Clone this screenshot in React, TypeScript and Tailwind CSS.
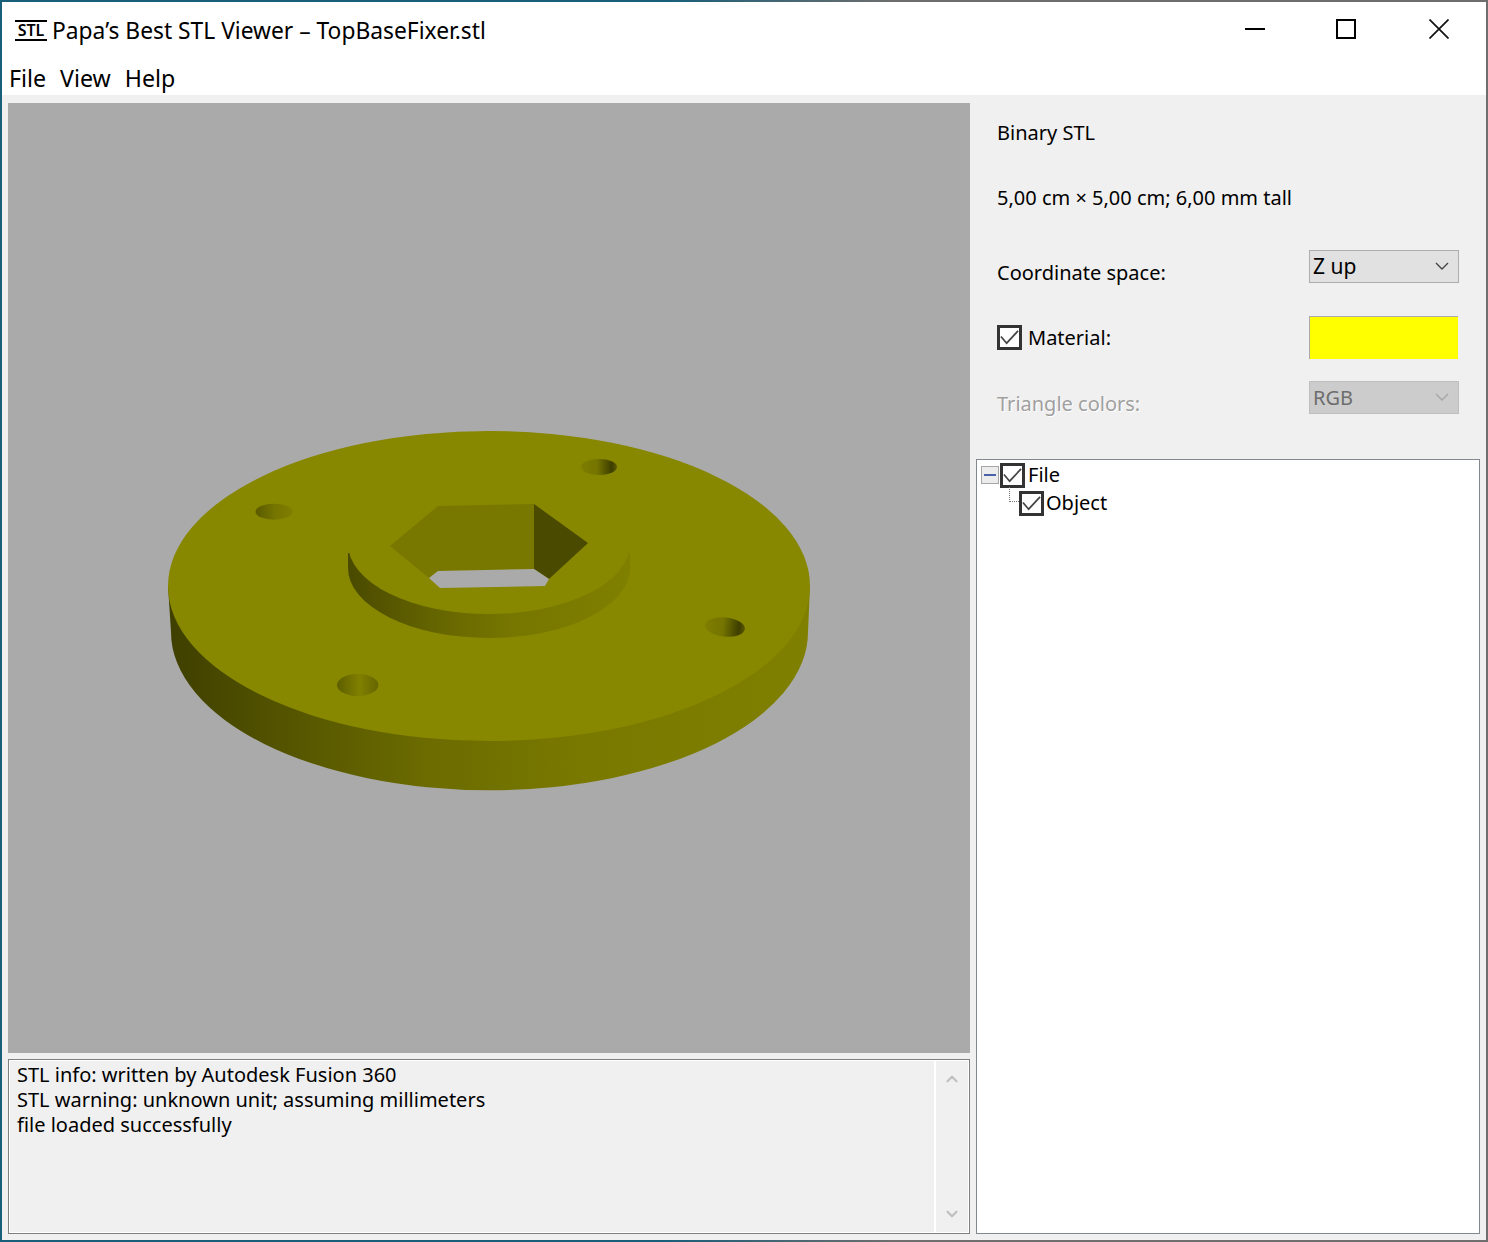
import { ChevronDown, ChevronUp } from "lucide-react";

const Check = () => (
  <span className="flex h-[25px] w-[25px] shrink-0 items-center justify-center border-[3px] border-[#333333] bg-white">
    <svg width="19" height="19" viewBox="0 0 20 20" fill="none" stroke="#444444" strokeWidth="1.8">
      <path d="M1 9l6 7L19 3" />
    </svg>
  </span>
);

const SelectBox = ({ label, disabled }: { label: string; disabled?: boolean }) => (
  <div
    className={
      disabled
        ? "flex h-[33px] w-[150px] items-center justify-between border border-[#bfbfbf] bg-[#cccccc] pl-[3px] pr-[8px] text-[20px] text-[#6d6d6d]"
        : "flex h-[33px] w-[150px] items-center justify-between border border-[#adadad] bg-[#e1e1e1] pb-[1px] pl-[3px] pr-[8px] text-[21px] text-black"
    }
  >
    <span>{label}</span>
    <svg width="16" height="9" viewBox="0 0 16 9" fill="none" stroke={disabled ? "#a6a6a6" : "#444444"} strokeWidth="1.4">
      <path d="M2 1l6 6 6-6" />
    </svg>
  </div>
);

const Part = () => (
  <svg className="block h-full w-full" viewBox="8 103 962 950">
    <defs>
      <linearGradient id="rim" x1="0" x2="1" y1="0" y2="0">
        <stop offset="0" stopColor="#3f3f00" />
        <stop offset="0.2" stopColor="#565600" />
        <stop offset="0.4" stopColor="#6b6b00" />
        <stop offset="0.65" stopColor="#797900" />
        <stop offset="1" stopColor="#7f7f00" />
      </linearGradient>
      <linearGradient id="hub" x1="0" x2="1" y1="0" y2="0">
        <stop offset="0" stopColor="#4a4a00" />
        <stop offset="0.35" stopColor="#686800" />
        <stop offset="0.6" stopColor="#777700" />
        <stop offset="1" stopColor="#7f7f00" />
      </linearGradient>
      <linearGradient id="boreA" x1="0" x2="1" y1="0" y2="0">
        <stop offset="0" stopColor="#5a5a00" />
        <stop offset="0.55" stopColor="#767600" />
        <stop offset="1" stopColor="#7e7e00" />
      </linearGradient>
      <linearGradient id="boreB" x1="0" x2="1" y1="0" y2="0">
        <stop offset="0" stopColor="#7e7e00" />
        <stop offset="0.45" stopColor="#747400" />
        <stop offset="0.85" stopColor="#3e3e00" />
        <stop offset="1" stopColor="#5a5a00" />
      </linearGradient>
      <linearGradient id="boreC" x1="0" x2="1" y1="0" y2="0">
        <stop offset="0" stopColor="#5e5e00" />
        <stop offset="0.55" stopColor="#808000" />
        <stop offset="1" stopColor="#656500" />
      </linearGradient>
    </defs>
    <path d="M168 586 L171 632 A318 158 0 0 0 808 632 L810 586 Z" fill="url(#rim)" />
    <ellipse cx="489" cy="586" rx="321" ry="155" fill="#878700" />
    <path d="M348 553 L348 568 A141 70 0 0 0 630 568 L630 553 Z" fill="url(#hub)" />
    <ellipse cx="489" cy="544" rx="141" ry="70" fill="#878700" />
    <polygon points="390,546 438,506 534,504 534,569 438,571 429,578" fill="#787800" />
    <polygon points="534,504 588,543 549,579 534,569" fill="#4a4a00" />
    <polygon points="438,571 534,569 549,579 545,586 440,588 429,578" fill="#aaaaaa" />
    <ellipse cx="274" cy="511.7" rx="18.5" ry="8" fill="url(#boreA)" />
    <ellipse cx="599" cy="467" rx="18" ry="8" fill="url(#boreB)" />
    <ellipse cx="725" cy="627" rx="20" ry="9.5" fill="url(#boreB)" transform="rotate(6 725 627)" />
    <ellipse cx="357.7" cy="685" rx="20.7" ry="11" fill="url(#boreC)" />
  </svg>
);

export default function App() {
  return (
    <div className="flex h-[1242px] w-[1488px] flex-col bg-[linear-gradient(90deg,#1a5f7a_0%,#1a5f7a_45%,#6e6e6e_60%)] p-[2px] font-['Noto_Sans',sans-serif] text-[20px] leading-[26px] text-black">
      {/* Title bar */}
      <div className="flex h-[53px] shrink-0 items-center bg-white pl-[13px] pr-[1px] pt-[3px]">
        <span className="flex h-[21px] w-[32px] items-center justify-center border-y-2 border-black text-[16px] font-semibold leading-none">
          STL
        </span>
        <span className="ml-[5px] pt-[2px] text-[22.8px]">Papa’s Best STL Viewer – TopBaseFixer.stl</span>
        <div className="mb-[2px] ml-auto flex h-[20px] items-center">
          <div className="flex w-[88px] justify-center">
            <div className="h-[2px] w-[20px] bg-black" />
          </div>
          <div className="flex w-[94px] justify-center">
            <div className="h-[20px] w-[20px] border-2 border-black" />
          </div>
          <div className="flex w-[92px] justify-center">
            <svg width="20" height="20" viewBox="0 0 20 20" stroke="#111111" strokeWidth="1.7">
              <path d="M0.5 0.5l19 19M19.5 0.5l-19 19" />
            </svg>
          </div>
        </div>
      </div>

      {/* Menu bar */}
      <div className="flex h-[40px] shrink-0 gap-[14px] bg-white pl-[7px] pt-[10px] text-[23.2px]">
        <span>File</span>
        <span>View</span>
        <span>Help</span>
      </div>

      {/* Body */}
      <div className="flex min-h-0 flex-1 bg-[#f0f0f0] pl-[6px]">
        <div className="flex w-[962px] shrink-0 flex-col gap-[6px] pb-[6px] pt-[8px]">
          <div className="h-[950px] bg-[#aaaaaa]">
            <Part />
          </div>
          <div className="flex h-[175px] border border-[#7f7f7f] shadow-[inset_0_0_0_1px_#ffffff]">
            <div className="flex-1 pl-[8px] pt-[2px] leading-[25px]">
              <div>STL info: written by Autodesk Fusion 360</div>
              <div>STL warning: unknown unit; assuming millimeters</div>
              <div>file loaded successfully</div>
            </div>
            <div className="my-[1px] mr-[1px] flex w-[34px] flex-col items-center justify-between border-l-2 border-white py-[9px] pr-[1px] text-[#c0c0c0]">
              <ChevronUp size={18} strokeWidth={3} />
              <ChevronDown size={18} strokeWidth={3} />
            </div>
          </div>
        </div>

        <div className="flex min-w-0 flex-1 flex-col pb-[6px] pr-[6px]">
          <div className="pl-[27px] pt-[25px]">
            <div>Binary STL</div>
            <div className="mt-[39px]">5,00 cm × 5,00 cm; 6,00 mm tall</div>
            <div className="mt-[39px] flex h-[33px] justify-between pr-[21px]">
              <span className="pt-[10px]">Coordinate space:</span>
              <SelectBox label="Z up" />
            </div>
            <div className="mt-[33px] flex h-[43px] items-center justify-between pr-[22px]">
              <span className="flex items-center gap-[6px]">
                <Check />
                <span>Material:</span>
              </span>
              <div className="h-[43px] w-[149px] border-l border-t border-[#ababab] bg-[#ffff00]" />
            </div>
            <div className="mt-[22px] flex h-[33px] justify-between pr-[21px]">
              <span className="pt-[10px] text-[#a0a0a0] [text-shadow:1px_1px_0_#ffffff]">Triangle colors:</span>
              <SelectBox label="RGB" disabled />
            </div>
          </div>

          <div className="ml-[6px] mt-[45px] flex-1 border border-[#828790] bg-white">
            <div className="flex h-[28px] items-center pl-[4px] pt-[2px]">
              <span className="flex h-[18px] w-[18px] items-center justify-center border border-[#a6a6a6] bg-[#ececec]">
                <span className="h-[2px] w-[12px] bg-[#4a62a8]" />
              </span>
              <span className="ml-[1px]">
                <Check />
              </span>
              <span className="ml-[3px]">File</span>
            </div>
            <div className="relative flex h-[28px] items-center pl-[42px] pt-[2px]">
              <span className="absolute left-[32px] top-[-1px] h-[15px] w-[10px] border-b border-l border-dotted border-[#777777]" />
              <Check />
              <span className="ml-[2px]">Object</span>
            </div>
          </div>
        </div>
      </div>
    </div>
  );
}
